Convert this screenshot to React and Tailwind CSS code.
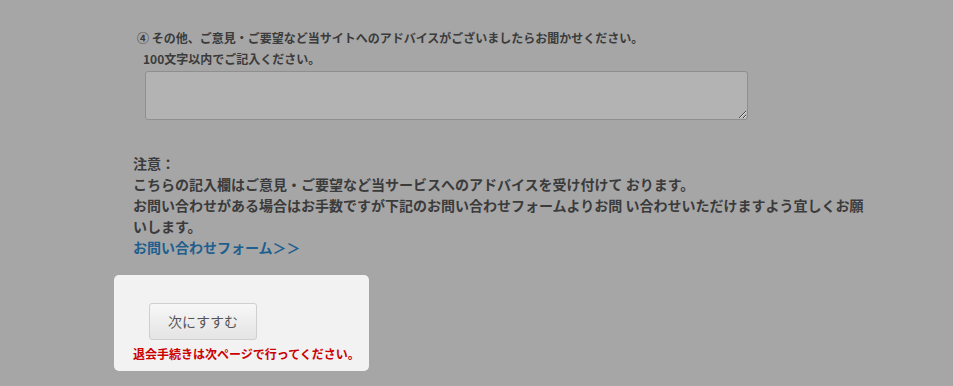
// App.jsx

import React from "react";

const FONT = { fontFamily: '"Noto Sans CJK JP", "Noto Sans", "Liberation Sans", sans-serif' };

function App() {
  return (
    <div className="w-full h-[386px] bg-[#a6a6a6] overflow-hidden text-[#3b3b3b]" style={FONT}>
      {/* Question 4 */}
      <div className="pt-[28px] pl-[137px]">
        <p className="text-[12px] leading-[20px] font-bold">
          ④ その他、ご意見・ご要望など当サイトへのアドバイスがございましたらお聞かせください。
        </p>
        <p className="text-[12px] leading-[20px] font-bold pl-[6px] mt-[1px]">
          100文字以内でご記入ください。
        </p>
        <div className="pl-[8px] mt-[2px]">
          <textarea
            className="block w-[603px] h-[49px] bg-[#b3b3b3] border border-[#8f8f8f] rounded-[3px] outline-none"
          />
        </div>
      </div>

      {/* Notice */}
      <div className="pl-[133px] mt-[33px] w-[873px] text-[14px] leading-[21px] font-bold">
        <p>注意：</p>
        <p>こちらの記入欄はご意見・ご要望など当サービスへのアドバイスを受け付けて おります。</p>
        <p>
          お問い合わせがある場合はお手数ですが下記のお問い合わせフォームよりお問 い合わせいただけますよう宜しくお願いします。
        </p>
        <a href="#" className="text-[#1f5f8e]">お問い合わせフォーム＞＞</a>
      </div>

      {/* Next step */}
      <div className="ml-[114px] mt-[17px] w-[255px] h-[96px] bg-[#f2f2f2] rounded-[5px] pt-[28px] pl-[19px]">
        <button
          type="button"
          className="ml-[16px] w-[108px] h-[37px] rounded-[3px] border border-[#cfcfcf] bg-gradient-to-b from-[#f7f7f7] to-[#e4e4e4] text-[14px] text-[#555]"
        >
          次にすすむ
        </button>
        <p className="text-[12px] leading-[18px] font-bold text-[#cc0000] mt-[5px]">
          退会手続きは次ページで行ってください。
        </p>
      </div>
    </div>
  );
}

export default App;
